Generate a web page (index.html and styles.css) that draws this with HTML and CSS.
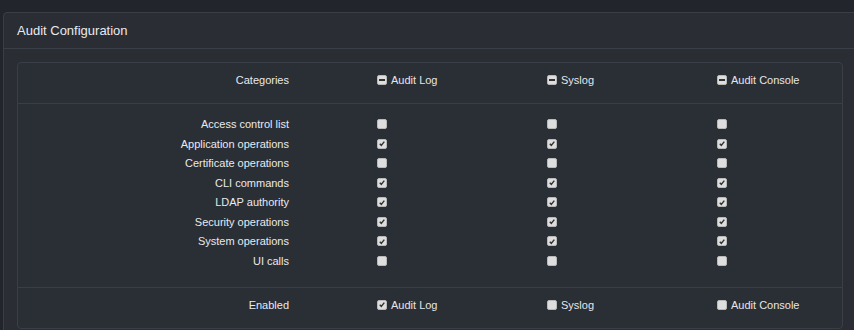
FILE: index.html
```html
<!DOCTYPE html>
<html lang="en">
<head>
    <meta charset="UTF-8">
    <meta name="viewport" content="width=device-width, initial-scale=1.0">
    <title>Audit Configuration</title>
    <link rel="stylesheet" href="styles.css">
</head>
<body>
    <div class="panel">
        <div class="panel-heading">Audit Configuration</div>
        <div class="panel-body">
            <div class="audit-box">
                <div class="section section-head">
                    <div class="row">
                        <div class="label">Categories</div>
                        <div class="cell"><span class="cb mixed"><i></i></span>Audit Log</div>
                        <div class="cell"><span class="cb mixed"><i></i></span>Syslog</div>
                        <div class="cell"><span class="cb mixed"><i></i></span>Audit Console</div>
                    </div>
                </div>

                <div class="section section-list">
                    <div class="row">
                        <div class="label">Access control list</div>
                        <div class="cell"><span class="cb"></span></div>
                        <div class="cell"><span class="cb"></span></div>
                        <div class="cell"><span class="cb"></span></div>
                    </div>
                    <div class="row">
                        <div class="label">Application operations</div>
                        <div class="cell"><span class="cb checked"><svg viewBox="0 0 10 10"><path d="M2.2 5.4 L4.1 7.3 L7.9 2.6"/></svg></span></div>
                        <div class="cell"><span class="cb checked"><svg viewBox="0 0 10 10"><path d="M2.2 5.4 L4.1 7.3 L7.9 2.6"/></svg></span></div>
                        <div class="cell"><span class="cb checked"><svg viewBox="0 0 10 10"><path d="M2.2 5.4 L4.1 7.3 L7.9 2.6"/></svg></span></div>
                    </div>
                    <div class="row">
                        <div class="label">Certificate operations</div>
                        <div class="cell"><span class="cb"></span></div>
                        <div class="cell"><span class="cb"></span></div>
                        <div class="cell"><span class="cb"></span></div>
                    </div>
                    <div class="row">
                        <div class="label">CLI commands</div>
                        <div class="cell"><span class="cb checked"><svg viewBox="0 0 10 10"><path d="M2.2 5.4 L4.1 7.3 L7.9 2.6"/></svg></span></div>
                        <div class="cell"><span class="cb checked"><svg viewBox="0 0 10 10"><path d="M2.2 5.4 L4.1 7.3 L7.9 2.6"/></svg></span></div>
                        <div class="cell"><span class="cb checked"><svg viewBox="0 0 10 10"><path d="M2.2 5.4 L4.1 7.3 L7.9 2.6"/></svg></span></div>
                    </div>
                    <div class="row">
                        <div class="label">LDAP authority</div>
                        <div class="cell"><span class="cb checked"><svg viewBox="0 0 10 10"><path d="M2.2 5.4 L4.1 7.3 L7.9 2.6"/></svg></span></div>
                        <div class="cell"><span class="cb checked"><svg viewBox="0 0 10 10"><path d="M2.2 5.4 L4.1 7.3 L7.9 2.6"/></svg></span></div>
                        <div class="cell"><span class="cb checked"><svg viewBox="0 0 10 10"><path d="M2.2 5.4 L4.1 7.3 L7.9 2.6"/></svg></span></div>
                    </div>
                    <div class="row">
                        <div class="label">Security operations</div>
                        <div class="cell"><span class="cb checked"><svg viewBox="0 0 10 10"><path d="M2.2 5.4 L4.1 7.3 L7.9 2.6"/></svg></span></div>
                        <div class="cell"><span class="cb checked"><svg viewBox="0 0 10 10"><path d="M2.2 5.4 L4.1 7.3 L7.9 2.6"/></svg></span></div>
                        <div class="cell"><span class="cb checked"><svg viewBox="0 0 10 10"><path d="M2.2 5.4 L4.1 7.3 L7.9 2.6"/></svg></span></div>
                    </div>
                    <div class="row">
                        <div class="label">System operations</div>
                        <div class="cell"><span class="cb checked"><svg viewBox="0 0 10 10"><path d="M2.2 5.4 L4.1 7.3 L7.9 2.6"/></svg></span></div>
                        <div class="cell"><span class="cb checked"><svg viewBox="0 0 10 10"><path d="M2.2 5.4 L4.1 7.3 L7.9 2.6"/></svg></span></div>
                        <div class="cell"><span class="cb checked"><svg viewBox="0 0 10 10"><path d="M2.2 5.4 L4.1 7.3 L7.9 2.6"/></svg></span></div>
                    </div>
                    <div class="row">
                        <div class="label">UI calls</div>
                        <div class="cell"><span class="cb"></span></div>
                        <div class="cell"><span class="cb"></span></div>
                        <div class="cell"><span class="cb"></span></div>
                    </div>
                </div>

                <div class="section section-foot">
                    <div class="row">
                        <div class="label">Enabled</div>
                        <div class="cell"><span class="cb checked"><svg viewBox="0 0 10 10"><path d="M2.2 5.4 L4.1 7.3 L7.9 2.6"/></svg></span>Audit Log</div>
                        <div class="cell"><span class="cb"></span>Syslog</div>
                        <div class="cell"><span class="cb"></span>Audit Console</div>
                    </div>
                </div>
            </div>
        </div>
    </div>
</body>
</html>
```

FILE: styles.css
```css
html, body {
    overflow: hidden;
}
body {
    margin: 0;
    padding-top: 12px;
    background: #22252b;
    color: #e4e6ea;
    font-family: 'Liberation Sans', Arial, sans-serif;
    font-size: 11px;
}
.panel {
    margin-left: 3px;
    width: 866px;
    background: #2a2d34;
    border: 1px solid #3a3e46;
    border-radius: 4px;
}
.panel-heading {
    padding: 8px 13px;
    line-height: 19px;
    font-size: 13px;
    color: #e8eaee;
    border-bottom: 1px solid #3a3e46;
}
.panel-body {
    padding: 13px 13px 20px;
}
.audit-box {
    width: 824px;
    border: 1px solid #3a3e46;
    border-radius: 4px;
    background: #2a2e35;
    overflow: hidden;
}
.section-head {
    padding: 7px 0 13px;
    border-bottom: 1px solid #3a3e46;
}
.section-head .row,
.section-foot .row {
    height: 20px;
}
.section-list {
    padding: 10.5px 0 16px;
    border-bottom: 1px solid #3a3e46;
}
.section-list .row {
    height: 19.5px;
}
.section-foot {
    padding: 7px 0 13px;
}
.row {
    display: flex;
    align-items: center;
}
.label {
    flex: none;
    width: 271px;
    text-align: right;
    color: #e8eaee;
}
.cell {
    flex: none;
    display: flex;
    align-items: center;
    width: 170px;
}
.label + .cell {
    margin-left: 88px;
}
.cb {
    flex: none;
    display: inline-flex;
    align-items: center;
    justify-content: center;
    box-sizing: border-box;
    width: 10px;
    height: 10px;
    margin-right: 4px;
    background: #dedede;
    border: 1px solid #b9b9b9;
    border-radius: 2px;
}
.cb svg {
    width: 9px;
    height: 9px;
}
.cb path {
    fill: none;
    stroke: #333;
    stroke-width: 1.8;
}
.cb.mixed i {
    display: block;
    width: 6px;
    height: 2px;
    background: #333;
}
```
